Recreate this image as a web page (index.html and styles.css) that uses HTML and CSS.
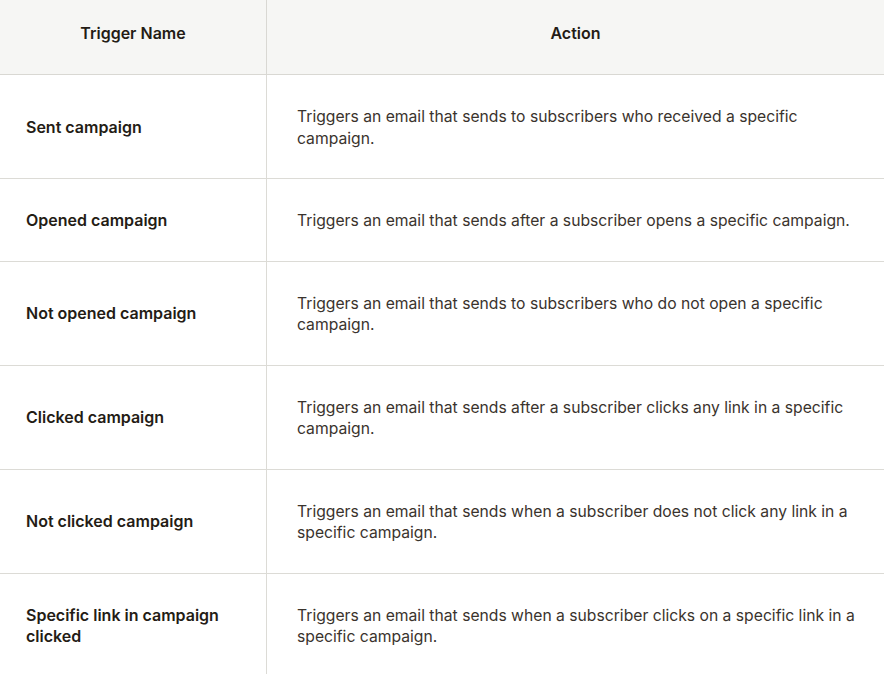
FILE: index.html
```html
<!DOCTYPE html>
<html>
<head>
<meta charset="utf-8">
<link rel="stylesheet" href="styles.css">
</head>
<body>
<table class="triggers">
  <thead>
    <tr>
      <th class="col-name">Trigger Name</th>
      <th class="col-action">Action</th>
    </tr>
  </thead>
  <tbody>
    <tr>
      <td class="name">Sent campaign</td>
      <td class="action">Triggers an email that sends to subscribers who received a specific campaign.</td>
    </tr>
    <tr>
      <td class="name">Opened campaign</td>
      <td class="action">Triggers an email that sends after a subscriber opens a specific campaign.</td>
    </tr>
    <tr>
      <td class="name">Not opened campaign</td>
      <td class="action">Triggers an email that sends to subscribers who do not open a specific campaign.</td>
    </tr>
    <tr>
      <td class="name">Clicked campaign</td>
      <td class="action">Triggers an email that sends after a subscriber clicks any link in a specific campaign.</td>
    </tr>
    <tr>
      <td class="name">Not clicked campaign</td>
      <td class="action">Triggers an email that sends when a subscriber does not click any link in a specific campaign.</td>
    </tr>
    <tr>
      <td class="name">Specific link in campaign clicked</td>
      <td class="action">Triggers an email that sends when a subscriber clicks on a specific link in a specific campaign.</td>
    </tr>
  </tbody>
</table>
</body>
</html>
```
FILE: styles.css
```css
html, body {
  margin: 0;
  padding: 0;
  background: #ffffff;
}
body {
  font-family: Inter, "Liberation Sans", sans-serif;
  color: #241c15;
}
.triggers {
  width: 884px;
  border-collapse: collapse;
  table-layout: fixed;
}
.col-name {
  width: 266px;
}
.triggers th {
  background: #f6f6f4;
  font-size: 16px;
  font-weight: 600;
  height: 66px;
  padding: 0 0 8px 0;
  text-align: center;
  vertical-align: middle;
  border-bottom: 1px solid #d9d8d3;
}
.triggers th.col-name {
  border-right: 1px solid #d9d8d3;
}
.triggers td {
  vertical-align: middle;
  line-height: 21.5px;
  border-bottom: 1px solid #dcdbd6;
}
.triggers td.name {
  font-weight: 600;
  font-size: 16px;
  padding: 31px 20px 29px 26px;
  border-right: 1px solid #dcdbd6;
}
.triggers td.action {
  font-size: 15.7px;
  color: #3a332d;
  padding: 31px 24px 29px 30px;
}
```
